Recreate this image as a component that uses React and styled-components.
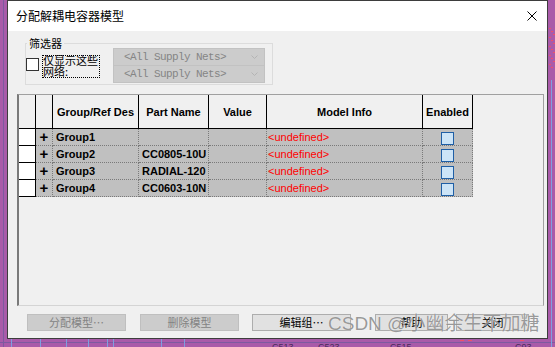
import React from 'react';
import styled, { createGlobalStyle } from 'styled-components';

const Global = createGlobalStyle`
  html, body { margin: 0; padding: 0; }
  body {
    width: 555px; height: 347px; overflow: hidden;
    background: #a95ba9;
    font-family: "Liberation Sans", Arial, sans-serif;
  }
`;

const CJK = `"Noto Sans CJK SC", "Liberation Sans", sans-serif`;

const Desktop = styled.div`
  position: relative;
  width: 555px;
  height: 347px;
  box-sizing: border-box;
  padding-left: 7px;
  background: #a95ba9;
  overflow: hidden;
`;

const Canvas = styled.svg`
  position: absolute;
  left: 0;
  top: 0;
  z-index: 0;
`;

const Dialog = styled.div`
  position: relative;
  z-index: 1;
  width: 541px;
  height: 339px;
  box-sizing: border-box;
  border: 1px solid #3d3d3d;
  background: #f0f0f0;
  display: flex;
  flex-direction: column;
`;

const TitleBar = styled.div`
  flex: none;
  height: 30px;
  background: #ffffff;
  display: flex;
  align-items: center;
  justify-content: space-between;
  padding: 0 10px 0 8px;
`;

const Title = styled.span`
  font: 12px/16px ${CJK};
  color: #000;
`;

const Body = styled.div`
  flex: 1;
  display: flex;
  flex-direction: column;
  align-items: flex-start;
`;

const GroupBox = styled.fieldset`
  margin: 7px 0 0 17px;
  padding: 0;
  width: 248px;
  min-width: 0;
  box-sizing: border-box;
  border: 1px solid #dcdcdc;
`;

const Legend = styled.legend`
  margin-left: 1px;
  padding: 0 2px;
  height: 10px;
  font: 11px/10px ${CJK};
  color: #000;
`;

const FilterRow = styled.div`
  display: flex;
  align-items: flex-start;
  height: 36px;
`;

const Check = styled.span`
  flex: none;
  display: block;
  width: 13px;
  height: 13px;
  box-sizing: border-box;
  margin-top: 10px;
  border: 1px solid #333;
  background: #fff;
`;

const CheckLabel = styled.span`
  flex: none;
  display: block;
  width: 58px;
  height: 23px;
  box-sizing: border-box;
  margin: 7px 0 0 3px;
  padding-left: 1px;
  outline: 1px dotted #000;
  outline-offset: -1px;
  font: 11px/11px ${CJK};
  color: #000;
`;

const Selects = styled.div`
  display: flex;
  flex-direction: column;
  margin-left: 13px;
`;

const Select = styled.div`
  width: 152px;
  height: 18px;
  box-sizing: border-box;
  margin-top: ${p => (p.$first ? 0 : -1)}px;
  border: 1px solid #c2c2c2;
  background: #cccccc;
  display: flex;
  align-items: center;
  justify-content: space-between;
  padding: 0 6px 0 10px;
  font: 11px/14px "Liberation Mono", "Courier New", monospace;
  letter-spacing: -0.6px;
  color: #858585;
`;

const TableBox = styled.div`
  margin: 9px 0 0 9px;
  width: 527px;
  height: 212px;
  box-sizing: border-box;
  border-top: 1px solid #a0a0a0;
  border-left: 2px solid #7a7a7a;
  border-right: 1px solid #a0a0a0;
  border-bottom: 1px solid #d4d4d4;
  background: #f0f0f0;
  overflow: hidden;
`;

const Grid = styled.table`
  width: 454px;
  table-layout: fixed;
  border-collapse: separate;
  border-spacing: 0;
`;

const Head = styled.th`
  box-sizing: border-box;
  width: ${p => p.$w}px;
  height: 34px;
  padding: 0;
  background: #f0f0f0;
  border-right: 1px solid #000;
  border-bottom: 1px solid #000;
  font: bold 11px/14px "Liberation Sans", Arial, sans-serif;
  color: #000;
  text-align: center;
  white-space: nowrap;
  overflow: hidden;
`;

const RowHead = styled.td`
  box-sizing: border-box;
  height: 17px;
  padding: 0;
  background: #ffffff;
  border-right: 1px solid #000;
  border-bottom: 1px solid #000;
`;

const Cell = styled.td`
  box-sizing: border-box;
  height: 17px;
  padding: 0 0 0 ${p => p.$pad ?? 3}px;
  background: #c0c0c0;
  border-right: 1px dotted #7a7a7a;
  border-bottom: 1px dotted #7a7a7a;
  font: ${p => (p.$red ? 'normal' : 'bold')} 11px/16px "Liberation Sans", Arial, sans-serif;
  color: ${p => (p.$red ? '#ff0000' : '#000')};
  text-align: ${p => (p.$center ? 'center' : 'left')};
  white-space: nowrap;
  overflow: hidden;
  vertical-align: top;
`;

const Plus = styled.span`
  display: block;
  font: bold 15px/16px "Liberation Sans", Arial, sans-serif;
  text-align: center;
  color: #000;
`;

const EnableBox = styled.span`
  display: block;
  width: 13px;
  height: 13px;
  box-sizing: border-box;
  margin: 3px auto 0;
  border: 1px solid #1f5fa6;
  background: #cce4f7;
`;

const Buttons = styled.div`
  display: flex;
  margin-top: 8px;
  padding-left: 19px;
`;

const Button = styled.div`
  width: ${p => p.$w}px;
  height: 17px;
  margin-left: ${p => p.$gap}px;
  box-sizing: border-box;
  border: 1px solid ${p => (p.$disabled ? '#bfbfbf' : '#adadad')};
  background: ${p => (p.$disabled ? '#cccccc' : '#e1e1e1')};
  color: ${p => (p.$disabled ? '#838383' : '#000')};
  font: 11px/15px ${CJK};
  text-align: center;
`;

const Watermark = styled.div`
  position: absolute;
  z-index: 2;
  left: 328px;
  top: 313px;
  font: 19px/22px "Liberation Sans", "Noto Sans CJK SC", sans-serif;
  color: rgba(115, 115, 115, 0.72);
  text-shadow: 0 0 1px rgba(255, 255, 255, 0.9);
  white-space: nowrap;
  pointer-events: none;
`;

const CloseIcon = () => (
  <svg width="10" height="10" viewBox="0 0 10 10">
    <path d="M0.5 0.5 L9.5 9.5 M9.5 0.5 L0.5 9.5" stroke="#000" strokeWidth="1" />
  </svg>
);

const Chevron = () => (
  <svg width="7" height="4" viewBox="0 0 7 4">
    <path d="M0.5 0.5 L3.5 3.5 L6.5 0.5" fill="none" stroke="#b4b4b4" strokeWidth="1" />
  </svg>
);

const columns = [
  { w: 17, label: '' },
  { w: 17, label: '' },
  { w: 86, label: 'Group/Ref Des' },
  { w: 70, label: 'Part Name' },
  { w: 58, label: 'Value' },
  { w: 156, label: 'Model Info' },
  { w: 50, label: 'Enabled' },
];

const rows = [
  { group: 'Group1', part: '' },
  { group: 'Group2', part: 'CC0805-10U' },
  { group: 'Group3', part: 'RADIAL-120' },
  { group: 'Group4', part: 'CC0603-10N' },
];

const buttons = [
  { label: '分配模型…', w: 99, gap: 0, disabled: true },
  { label: '删除模型', w: 99, gap: 14, disabled: true },
  { label: '编辑组…', w: 99, gap: 13 },
  { label: '帮助', w: 73, gap: 24 },
  { label: '关闭', w: 73, gap: 8 },
];

const Background = () => (
  <Canvas width="555" height="347" viewBox="0 0 555 347">
    <g stroke="#7d5aa0" strokeWidth="1">
      <line x1="3.5" y1="0" x2="3.5" y2="347" />
      <line x1="0" y1="342.5" x2="555" y2="342.5" />
    </g>
    <g stroke="#7f9fe0" strokeWidth="1">
      <line x1="11.5" y1="339" x2="11.5" y2="347" />
      <line x1="40.5" y1="339" x2="40.5" y2="347" />
      <line x1="66.5" y1="339" x2="66.5" y2="347" />
      <line x1="88.5" y1="339" x2="88.5" y2="347" />
      <line x1="107.5" y1="339" x2="107.5" y2="347" />
      <line x1="113.5" y1="339" x2="113.5" y2="347" />
      <line x1="161.5" y1="339" x2="161.5" y2="347" />
      <line x1="184.5" y1="339" x2="184.5" y2="347" />
      <line x1="551.5" y1="80" x2="551.5" y2="347" />
    </g>
    <g fill="#ef4f6a">
      {Array.from({ length: 14 }).map((_, i) => (
        <rect key={i} x={549 + (i % 3) * 2} y={28 + i * 3} width="2" height="1" />
      ))}
      <rect x="460" y="340" width="4" height="1" />
      <rect x="468" y="340" width="4" height="1" />
      <rect x="520" y="340" width="4" height="1" />
    </g>
    <g fill="#4a2a5a" fontFamily="Liberation Sans, sans-serif" fontSize="9">
      <text x="272" y="350">C513</text>
      <text x="318" y="350">C523</text>
      <text x="390" y="350">C515</text>
      <text x="515" y="350">C93</text>
    </g>
  </Canvas>
);

export default function App() {
  return (
    <>
      <Global />
      <Desktop>
        <Background />
        <Dialog>
          <TitleBar>
            <Title>分配解耦电容器模型</Title>
            <CloseIcon />
          </TitleBar>
          <Body>
            <GroupBox>
              <Legend>筛选器</Legend>
              <FilterRow>
                <Check />
                <CheckLabel>仅显示这些网络:</CheckLabel>
                <Selects>
                  <Select $first>
                    <span>&lt;All Supply Nets&gt;</span>
                    <Chevron />
                  </Select>
                  <Select>
                    <span>&lt;All Supply Nets&gt;</span>
                    <Chevron />
                  </Select>
                </Selects>
              </FilterRow>
            </GroupBox>
            <TableBox>
              <Grid>
                <thead>
                  <tr>
                    {columns.map((c, i) => (
                      <Head key={i} $w={c.w}>{c.label}</Head>
                    ))}
                  </tr>
                </thead>
                <tbody>
                  {rows.map(r => (
                    <tr key={r.group}>
                      <RowHead />
                      <Cell $pad={0}><Plus>+</Plus></Cell>
                      <Cell>{r.group}</Cell>
                      <Cell>{r.part}</Cell>
                      <Cell />
                      <Cell $red $pad={1}>&lt;undefined&gt;</Cell>
                      <Cell $pad={0} $center><EnableBox /></Cell>
                    </tr>
                  ))}
                </tbody>
              </Grid>
            </TableBox>
            <Buttons>
              {buttons.map(b => (
                <Button key={b.label} $w={b.w} $gap={b.gap} $disabled={b.disabled}>
                  {b.label}
                </Button>
              ))}
            </Buttons>
          </Body>
        </Dialog>
        <Watermark>CSDN @小幽余生不加糖</Watermark>
      </Desktop>
    </>
  );
}
